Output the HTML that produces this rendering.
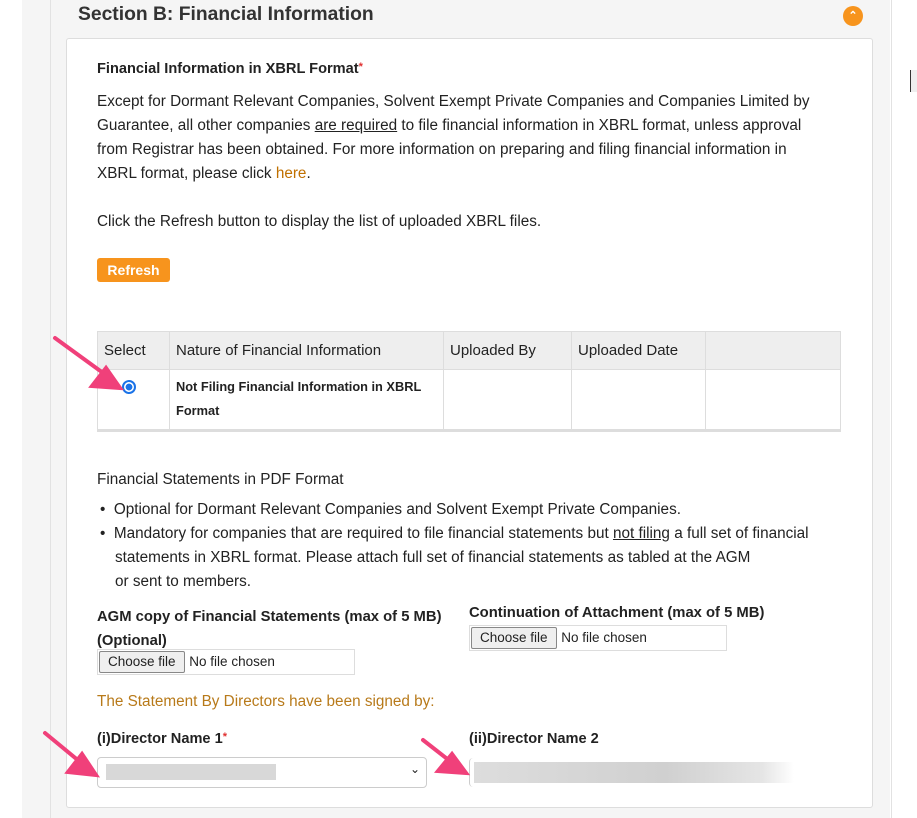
<!DOCTYPE html>
<html><head><meta charset="utf-8"><style>
body{margin:0;width:917px;height:818px;background:#fff;font-family:"Liberation Sans",sans-serif;color:#222;position:relative;overflow:hidden}
.a{position:absolute;white-space:nowrap}
.t{font-size:15.3px}
.b{font-weight:bold}
.star{color:#e03030;font-size:11px;vertical-align:top}
.fb{position:absolute;height:24px;border:1px solid #ddd;background:#fff;font-size:13.5px}
.fb span.btn{display:inline-block;height:20px;line-height:20px;padding:0 8px;margin:1px;border:1px solid #888;border-radius:2px;background:#efefef}
td,th{border:1px solid #ddd;font-size:15px;text-align:left;vertical-align:top;box-sizing:border-box}
</style></head><body>
<div class="a" style="left:22px;top:0;width:868px;height:818px;background:#f5f5f5"></div>
<div class="a" style="left:50px;top:0;width:840px;height:818px;border-left:1px solid #e2e2e2;border-right:1px solid #e2e2e2"></div>
<div class="a" style="left:78px;top:4px;font-size:19.3px;font-weight:bold;color:#333">Section B: Financial Information</div>
<div class="a" style="left:843px;top:6px;width:20px;height:20px;border-radius:50%;background:#f7941d;color:#fff;font-size:11px;text-align:center;line-height:20px;font-weight:bold">&#8963;</div>
<div class="a" style="left:66px;top:38px;width:805px;height:768px;background:#fff;border:1px solid #ddd;border-radius:3px"></div>
<div class="a" style="left:910px;top:70px;width:7px;height:22px;background:#eee;border-left:1px solid #333"></div>

<div class="a b" style="left:97px;top:61px;font-size:14.6px">Financial Information in XBRL Format<span class="star">*</span></div>
<div class="a t" style="left:97px;top:90px;line-height:24px;white-space:normal;width:728px">Except for Dormant Relevant Companies, Solvent Exempt Private Companies and Companies Limited by Guarantee, all other companies <u>are required</u> to file financial information in XBRL format, unless approval from Registrar has been obtained. For more information on preparing and filing financial information in XBRL format, please click <span style="color:#c07000">here</span>.</div>
<div class="a t" style="left:97px;top:213px">Click the Refresh button to display the list of uploaded XBRL files.</div>
<div class="a" style="left:97px;top:258px;width:73px;height:24px;background:#f7941d;border-radius:3px;color:#fff;font-weight:bold;font-size:14px;text-align:center;line-height:24px">Refresh</div>

<table class="a" style="left:97px;top:331px;width:744px;border-collapse:collapse;border-bottom:3px solid #ddd;table-layout:fixed">
<tr style="background:#eee;height:38px"><th style="width:72px;padding:10px 6px 0;font-weight:normal">Select</th><th style="width:274px;padding:10px 6px 0;font-weight:normal">Nature of Financial Information</th><th style="width:128px;padding:10px 6px 0;font-weight:normal">Uploaded By</th><th style="width:134px;padding:10px 6px 0;font-weight:normal">Uploaded Date</th><th></th></tr>
<tr style="height:61px"><td style="padding:10px 24px"><span style="display:inline-block;width:10px;height:10px;border-radius:50%;border:2px solid #1a73e8;background:radial-gradient(#1a73e8 45%,#fff 50%)"></span></td><td style="font-size:12.8px;font-weight:bold;line-height:24px;padding:5px 6px">Not Filing Financial Information in XBRL<br>Format</td><td></td><td></td><td></td></tr>
</table>

<div class="a t" style="left:97px;top:471px">Financial Statements in PDF Format</div>
<div class="a t" style="left:100px;top:498px;line-height:24px;white-space:normal;width:745px">
<div>&#8226;&nbsp; Optional for Dormant Relevant Companies and Solvent Exempt Private Companies.</div>
<div style="padding-left:15px;text-indent:-15px">&#8226;&nbsp; Mandatory for companies that are required to file financial statements but <u>not filing</u> a full set of financial statements in XBRL format. Please attach full set of financial statements as tabled at the AGM<br>or sent to members.</div></div>
<div class="a b" style="left:97px;top:605px;line-height:24px;font-size:14.8px">AGM copy of Financial Statements (max of 5 MB)<br>(Optional)</div>
<div class="a b" style="left:469px;top:605px;font-size:14.8px">Continuation of Attachment (max of 5 MB)</div>
<div class="fb" style="left:97px;top:649px;width:256px"><span class="btn">Choose file</span> No file chosen</div>
<div class="fb" style="left:469px;top:625px;width:256px"><span class="btn">Choose file</span> No file chosen</div>
<div class="a t" style="left:97px;top:693px;color:#b87a1a">The Statement By Directors have been signed by:</div>
<div class="a b" style="left:97px;top:731px;font-size:14.6px">(i)Director Name 1<span class="star">*</span></div>
<div class="a b" style="left:469px;top:731px;font-size:14.6px">(ii)Director Name 2</div>
<div class="a" style="left:97px;top:757px;width:328px;height:29px;border:1px solid #ccc;border-radius:4px;background:#fff"><div style="position:absolute;left:8px;top:6px;width:170px;height:16px;background:#d8d8d8"></div><div style="position:absolute;right:6px;top:4px;font-size:12px">&#8964;</div></div>
<div class="a" style="left:469px;top:758px;width:335px;height:29px;border-left:1px solid #ccc;border-radius:4px"><div style="position:absolute;left:4px;top:4px;width:320px;height:21px;background:linear-gradient(90deg,#ddd,#d0d0d0 60%,#e5e5e5 90%,#fff)"></div></div>

<svg class="a" style="left:0;top:0" width="917" height="818">
<g fill="#f0407a" stroke="#f0407a" stroke-width="4" stroke-linecap="round">
<line x1="55" y1="338" x2="110" y2="378"/><polygon points="120,388 92,386 106,368"/>
<line x1="45" y1="733" x2="85" y2="766"/><polygon points="96,775 68,772 82,754"/>
<line x1="423" y1="740" x2="455" y2="765"/><polygon points="466,773 438,771 452,754"/>
</g></svg>
</body></html>
